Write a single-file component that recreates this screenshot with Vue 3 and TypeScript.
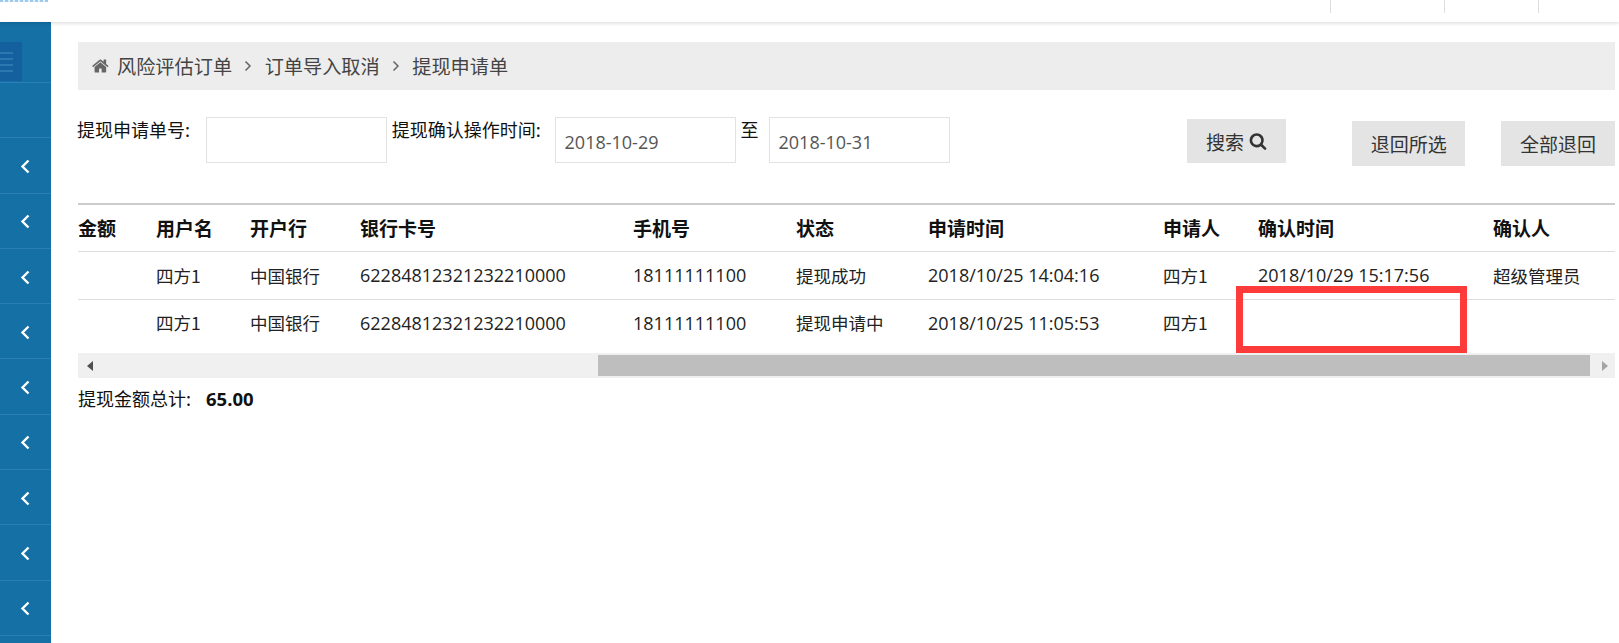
<template>
  <div class="page">
    <header class="top-bar">
      <div class="logo-strip"></div>
      <div class="top-links">
        <span class="top-link link-a"></span>
        <span class="top-link link-b"></span>
        <span class="top-link link-c"></span>
      </div>
    </header>

    <div class="layout">
      <aside class="sidebar">
        <div class="side-toggle-row">
          <div class="side-toggle">
            <span></span>
            <span></span>
            <span></span>
            <span></span>
          </div>
        </div>
        <div class="side-empty"></div>
        <div v-for="n in 9" :key="n" class="side-item">
          <svg width="10" height="15" viewBox="0 0 10 15">
            <path d="M8.500 1.500 L2.500 7.500 L8.500 13.500" fill="none" stroke="#fff" stroke-width="2.400" />
          </svg>
        </div>
      </aside>

      <main class="content">
        <nav class="crumbs">
          <svg class="home-icon" width="18" height="18" viewBox="0 0 1792 1792">
            <path fill="#666" d="M1408 992v480q0 26-19 45t-45 19h-384v-384h-256v384h-384q-26 0-45-19t-19-45v-480q0-1 .5-3t.5-3l575-474 575 474q1 2 1 6zm223-69l-62 74q-8 9-21 11h-3q-13 0-21-7l-692-577-692 577q-12 8-24 7-13-2-21-11l-62-74q-8-10-7-23.500t11-21.500l719-599q32-26 76-26t76 26l244 204v-195q0-14 9-23t23-9h192q14 0 23 9t9 23v408l219 182q10 8 11 21.500t-7 23.500z" />
          </svg>
          <span>风险评估订单</span>
          <svg class="sep" width="8" height="12" viewBox="0 0 8 12">
            <path d="M1.500 1.500 L6 6 L1.500 10.500" fill="none" stroke="#666" stroke-width="1.500" />
          </svg>
          <span>订单导入取消</span>
          <svg class="sep" width="8" height="12" viewBox="0 0 8 12">
            <path d="M1.500 1.500 L6 6 L1.500 10.500" fill="none" stroke="#666" stroke-width="1.500" />
          </svg>
          <span>提现申请单</span>
        </nav>

        <form class="filters" @submit.prevent>
          <label class="f-label label-no">提现申请单号:</label>
          <input class="f-input input-no" type="text" />
          <label class="f-label label-time">提现确认操作时间:</label>
          <input class="f-input input-date" type="text" value="2018-10-29" />
          <span class="f-label label-to">至</span>
          <input class="f-input input-date" type="text" value="2018-10-31" />
          <button class="btn btn-search" type="button">
            搜索
            <svg width="18" height="18" viewBox="0 0 1792 1792">
              <path fill="#333" d="M1216 832q0-185-131.500-316.500t-316.500-131.500-316.500 131.500-131.500 316.500 131.500 316.500 316.500 131.500 316.500-131.500 131.500-316.500zm512 832q0 52-38 90t-90 38q-54 0-90-38l-343-342q-179 124-399 124-143 0-273.500-55.500t-225-150-150-225-55.500-273.500 55.500-273.500 150-225 225-150 273.500-55.500 273.500 55.500 225 150 150 225 55.500 273.500q0 220-124 399l343 343q37 37 37 90z" />
            </svg>
          </button>
          <button class="btn btn-back" type="button">退回所选</button>
          <button class="btn btn-all" type="button">全部退回</button>
        </form>

        <div class="table-wrap">
          <table class="data-table">
            <colgroup>
              <col v-for="c in columns" :key="c.title" :style="{ width: c.width + 'px' }" />
            </colgroup>
            <thead>
              <tr>
                <th v-for="c in columns" :key="c.title">{{ c.title }}</th>
              </tr>
            </thead>
            <tbody>
              <tr v-for="row in rows" :key="row.applied">
                <td></td>
                <td>四方1</td>
                <td>中国银行</td>
                <td class="num">62284812321232210000</td>
                <td class="num">18111111100</td>
                <td>{{ row.status }}</td>
                <td class="num">{{ row.applied }}</td>
                <td>四方1</td>
                <td class="num">{{ row.confirmed }}</td>
                <td>{{ row.confirmer }}</td>
              </tr>
            </tbody>
          </table>
          <div class="red-mark"></div>
        </div>

        <div class="scrollbar">
          <span class="arrow arrow-left"></span>
          <div class="scroll-track"><div class="scroll-thumb"></div></div>
          <span class="arrow arrow-right"></span>
        </div>

        <div class="total">
          <span>提现金额总计:</span>
          <strong>65.00</strong>
        </div>
      </main>
    </div>
  </div>
</template>

<script setup lang="ts">
interface Column {
  title: string
  width: number
}

const columns: Column[] = [
  { title: '金额', width: 78 },
  { title: '用户名', width: 94 },
  { title: '开户行', width: 110 },
  { title: '银行卡号', width: 273 },
  { title: '手机号', width: 163 },
  { title: '状态', width: 132 },
  { title: '申请时间', width: 235 },
  { title: '申请人', width: 95 },
  { title: '确认时间', width: 235 },
  { title: '确认人', width: 122 },
]

const rows = [
  { status: '提现成功', applied: '2018/10/25 14:04:16', confirmed: '2018/10/29 15:17:56', confirmer: '超级管理员' },
  { status: '提现申请中', applied: '2018/10/25 11:05:53', confirmed: '', confirmer: '' },
]
</script>

<style>
html,
body {
  margin: 0;
  background: #fff;
  overflow: hidden;
}
</style>

<style scoped>
.page {
  width: 1619px;
  height: 643px;
  overflow: hidden;
  font-family: "Noto Sans CJK SC", "Open Sans", sans-serif;
  color: #222;
  background: #fff;
}

/* top bar */
.top-bar {
  height: 22px;
  display: flex;
  justify-content: space-between;
  position: relative;
  z-index: 2;
  background: #fff;
  box-shadow: 0 1px 4px rgba(0, 0, 0, 0.16);
}
.logo-strip {
  width: 48px;
  height: 2px;
  background: repeating-linear-gradient(90deg, #9cc9ec 0 3px, #e4f1fb 3px 5px);
}
.top-links {
  display: flex;
  height: 13px;
}
.top-link {
  border-left: 1px solid #ddd;
}
.link-a { width: 113px; }
.link-b { width: 93px; }
.link-c { width: 80px; }

/* sidebar */
.layout {
  display: flex;
  height: 621px;
}
.sidebar {
  width: 51px;
  flex: none;
  background: #1570a6;
}
.side-toggle-row {
  height: 61px;
  padding-top: 20px;
  box-sizing: border-box;
  border-bottom: 1px solid #2a7fb8;
}
.side-toggle {
  width: 22px;
  height: 39px;
  background: #14609f;
  display: flex;
  flex-direction: column;
  justify-content: center;
  gap: 4px;
}
.side-toggle span {
  display: block;
  width: 13px;
  height: 2px;
  background: #2a78b0;
}
.side-empty {
  height: 54.300px;
  border-bottom: 1px solid #2a7fb8;
}
.side-item {
  height: 52.300px;
  border-bottom: 1px solid #2a7fb8;
  display: flex;
  align-items: center;
  justify-content: center;
  padding: 2px 2px 0 0;
  box-sizing: content-box;
}

/* content */
.content {
  flex: 1;
  min-width: 0;
  padding: 20px 4px 0 27px;
}
.crumbs {
  height: 48px;
  background: #ededed;
  display: flex;
  align-items: center;
  padding-left: 14px;
  font-size: 19.200px;
  line-height: 46px;
  color: #444;
}
.home-icon {
  margin-right: 7px;
}
.sep {
  margin: 0 12.250px;
}

.filters {
  display: flex;
  align-items: flex-start;
  height: 113px;
  padding-top: 27px;
  box-sizing: border-box;
}
.f-label {
  font-size: 18px;
  line-height: 24px;
  color: #111;
  white-space: nowrap;
}
.label-no {
  width: 127px;
  margin-left: -1px;
  padding-right: 2px;
}
.label-time { width: 163px; margin-left: 5px; }
.label-to { width: 28px; margin-left: 5px; }
.f-input {
  height: 46px;
  width: 181px;
  box-sizing: border-box;
  border: 1px solid #e2e2e2;
  padding: 3px 9px 0;
  font: 18px "Open Sans", sans-serif;
  color: #555;
  background: #fff;
  outline: none;
}
.btn {
  border: none;
  background: #e4e4e4;
  color: #333;
  font-family: inherit;
  font-size: 19px;
  padding: 0;
  height: 45px;
}
.btn-search {
  width: 100px;
  height: 44px;
  margin-left: 237px;
  margin-top: 2px;
  display: flex;
  align-items: center;
  justify-content: center;
  gap: 5px;
}
.btn-back {
  width: 113px;
  margin-left: 66px;
  margin-top: 4px;
}
.btn-all {
  width: 114px;
  margin-left: 36px;
  margin-top: 4px;
}

/* table */
.table-wrap {
  position: relative;
  overflow: hidden;
  border-top: 2px solid #ccc;
}
.data-table {
  width: 1537px;
  table-layout: fixed;
  border-collapse: collapse;
}
.data-table th,
.data-table td {
  padding: 0;
  text-align: left;
  white-space: nowrap;
  border-bottom: 1px solid #ddd;
  box-sizing: border-box;
}
.data-table th {
  height: 46px;
  font-size: 19px;
  font-weight: 700;
  color: #111;
}
.data-table td {
  height: 48px;
  font-size: 17.500px;
  color: #222;
}
.data-table td.num {
  font-family: "Open Sans", sans-serif;
  font-size: 18px;
}
.data-table tbody tr:last-child td {
  border-bottom: none;
  height: 54px;
  padding-bottom: 7px;
}
.red-mark {
  position: absolute;
  left: 1158px;
  top: 81px;
  width: 231px;
  height: 67px;
  box-sizing: border-box;
  border: 7px solid #fd3b3b;
}

/* fake horizontal scrollbar */
.scrollbar {
  height: 25px;
  background: #f0f0f0;
  display: flex;
  align-items: center;
}
.scroll-track {
  flex: 1;
  height: 21px;
}
.scroll-thumb {
  width: 992px;
  height: 100%;
  margin-left: 498px;
  background: #bebebe;
}
.arrow {
  width: 0;
  height: 0;
  flex: none;
  border-top: 5px solid transparent;
  border-bottom: 5px solid transparent;
}
.arrow-left {
  border-right: 6px solid #505050;
  margin: 0 7px 0 9px;
}
.arrow-right {
  border-left: 6px solid #a3a3a3;
  margin: 0 7px 0 10px;
}

.total {
  display: flex;
  align-items: center;
  height: 40px;
  font-size: 18px;
  color: #111;
}
.total strong {
  margin-left: 15px;
  font-size: 18.500px;
  font-family: "Open Sans", sans-serif;
}
</style>
